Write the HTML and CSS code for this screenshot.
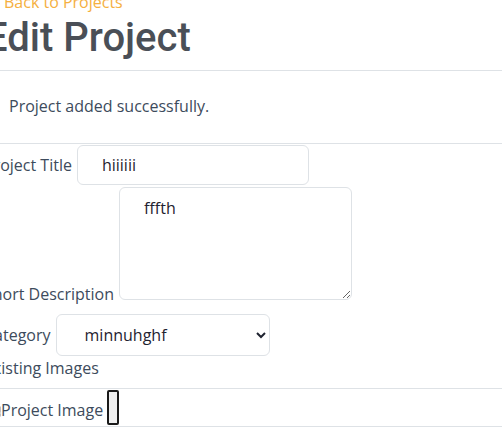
FILE: index.html
```html
<!DOCTYPE html>
<html lang="en">
<head>
<meta charset="utf-8">
<title>Edit Project</title>
<link rel="stylesheet" href="styles.css">
</head>
<body>
<div class="page">
  <div class="back-row"><a class="back" href="#"><span class="arrow">&larr;</span>Back to Projects</a></div>
  <h1 class="title">Edit Project</h1>
  <hr class="rule">
  <div class="alert">Project added successfully.</div>
  <hr class="rule">
  <form class="form">
    <div class="group g-title"><label class="label">Project Title</label><input class="field input" type="text" value="hiiiiii"></div>
    <div class="group g-desc"><label class="label">Short Description</label><textarea class="field textarea">fffth</textarea></div>
    <div class="group g-cat"><label class="label">Category</label><select class="field select"><option>minnuhghf</option></select></div>
    <div class="group g-existing"><label class="label">Existing Images</label></div>
    <hr class="rule">
    <div class="group g-image"><span class="broken"><svg width="17" height="16" viewBox="0 0 17 16"><path d="M3 2h10l3 3v5q-1 1 0 2v2H3z" fill="none" stroke="#9a9a9a" stroke-width="1.2"/><path d="M13 2v3h3" fill="none" stroke="#9a9a9a" stroke-width="1"/></svg></span><label class="label">Project Image</label><span class="file"></span></div>
    <hr class="rule">
  </form>
</div>
</body>
</html>
```
FILE: styles.css
```css
html, body {
  margin: 0;
  padding: 0;
  background: #ffffff;
  overflow: hidden;
}

body {
  font-family: "Open Sans", "Liberation Sans", sans-serif;
  font-size: 16px;
  line-height: 1.5;
  color: #3d4b5c;
}

.page {
  margin-left: -16px;
  margin-top: -10px;
  width: 518px;
}

.back-row {
  height: 24px;
  padding-left: 1px;
}

.back {
  color: #f5b041;
  text-decoration: none;
}

.arrow {
  display: inline-block;
  width: 19px;
  font-family: "DejaVu Sans", sans-serif;
  font-size: 13px;
}

.title {
  margin: 0 0 8px 1px;
  font-family: Roboto, "Liberation Sans", sans-serif;
  font-weight: 500;
  font-size: 40px;
  line-height: 48px;
  color: #4a4f57;
}

.rule {
  margin: 0;
  border: 0;
  border-top: 1px solid #dee2e6;
  height: 0;
}

.alert {
  padding: 23px 0 25px 25px;
}

.form {
  margin: 0;
}

.group {
  white-space: nowrap;
}

.label {
  margin-right: 5px;
}

.field {
  box-sizing: border-box;
  font-family: "Open Sans", "Liberation Sans", sans-serif;
  font-size: 16px;
  line-height: 24px;
  color: #1f2330;
  border: 1px solid #dee2e6;
  border-radius: 6px;
  background: #ffffff;
  margin: 0;
}

.g-title {
  margin-top: 1px;
}

.input {
  width: 232px;
  height: 40px;
  padding: 7px 24px;
}

.g-desc {
  margin-top: 2px;
}

.textarea {
  width: 233px;
  height: 113px;
  padding: 8px 24px;
  resize: vertical;
  vertical-align: baseline;
}

.g-cat {
  margin-top: 8px;
}

.select {
  width: 214px;
  height: 42px;
  padding: 0 8px 0 24px;
}

.g-existing {
  line-height: 24px;
  margin-bottom: 8px;
}

.g-image {
  margin-top: 1px;
  margin-bottom: 1px;
}

.broken {
  display: inline-block;
  width: 17px;
  height: 16px;
  vertical-align: -2px;
}

.broken svg {
  display: block;
}

.g-image .label {
  margin-right: 4px;
}

.file {
  display: inline-block;
  box-sizing: border-box;
  width: 12px;
  height: 35px;
  border: 2px solid #1a1a1a;
  border-radius: 2px;
  background: #efefef;
  vertical-align: -9px;
}
```
